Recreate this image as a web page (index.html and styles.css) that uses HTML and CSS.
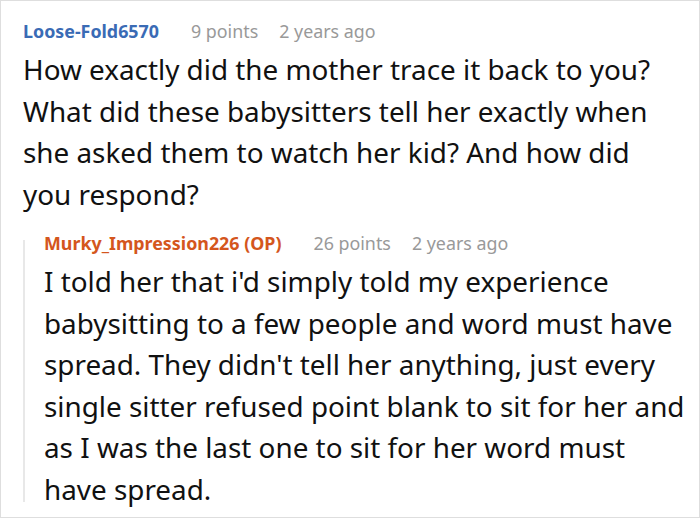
FILE: index.html
```html
<!DOCTYPE html>
<html>
<head>
<meta charset="utf-8">
<link rel="stylesheet" href="styles.css">
</head>
<body>
<div class="thread">
  <div class="comment">
    <div class="meta">
      <span class="author">Loose-Fold6570</span>
      <span class="info">9 points</span>
      <span class="info">2 years ago</span>
    </div>
    <p class="text narrow">How exactly did the mother trace it back to you? What did these babysitters tell her exactly when she asked them to watch her kid? And how did you respond?</p>
    <div class="reply">
      <div class="meta">
        <span class="author op">Murky_Impression226 (OP)</span>
        <span class="info">26 points</span>
        <span class="info">2 years ago</span>
      </div>
      <p class="text">I told her that i'd simply told my experience babysitting to a few people and word must have spread. They didn't tell her anything, just every single sitter refused point blank to sit for her and as I was the last one to sit for her word must have spread.</p>
    </div>
  </div>
</div>
</body>
</html>
```

FILE: styles.css
```css
html, body {
  margin: 0;
  padding: 0;
  background: #fff;
}
body {
  font-family: "Noto Sans", "Open Sans", sans-serif;
}
.thread {
  width: 700px;
  height: 518px;
  box-sizing: border-box;
  border: 1px solid #dedede;
  padding: 17px 7px 0 22px;
  overflow: hidden;
}
.meta {
  display: flex;
  gap: 21px;
  font-size: 17.85px;
  line-height: 26px;
  margin-bottom: 5px;
}
.author {
  color: #3a6bb5;
  font-weight: 700;
  margin-right: 11px;
}
.author.op {
  color: #d4561d;
}
.info {
  color: #999;
}
.text {
  margin: 0;
  font-size: 27.85px;
  line-height: 41.5px;
  color: #111;
}
.text.narrow {
  margin-right: 26px;
}
.reply {
  position: relative;
  margin-top: 15px;
  padding-left: 21px;
}
.reply::before {
  content: "";
  position: absolute;
  left: 0;
  top: 10px;
  bottom: 8px;
  width: 2px;
  background: #e8e8e8;
}
```
